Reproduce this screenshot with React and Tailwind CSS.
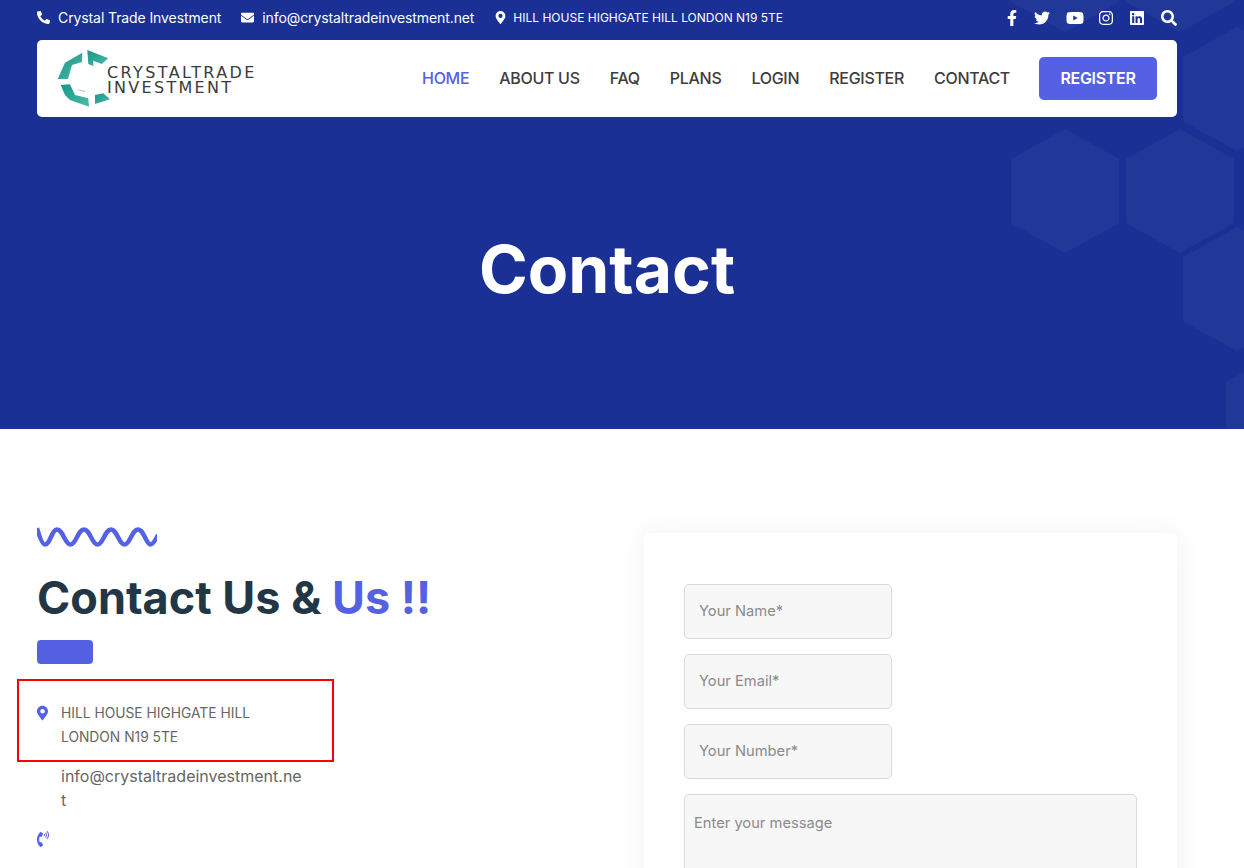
import {
  FaFacebookF,
  FaTwitter,
  FaYoutube,
  FaInstagram,
  FaLinkedin,
  FaSearch,
  FaPhoneAlt,
  FaEnvelope,
  FaMapMarkerAlt,
  FaPhoneVolume,
} from "react-icons/fa";

const navLinks = ["ABOUT US", "FAQ", "PLANS", "LOGIN", "REGISTER", "CONTACT"];
const fields = ["Your Name*", "Your Email*", "Your Number*"];

// Background hexagons of the banner, as centre x / top y
const hexagons = [
  [1065, -92],
  [1180, -92],
  [1237, 27],
  [1065, 129],
  [1180, 129],
  [1237, 227],
  [1280, 352],
];

function hexPoints(cx, top) {
  return [
    [cx, top],
    [cx + 54, top + 30],
    [cx + 54, top + 94],
    [cx, top + 124],
    [cx - 54, top + 94],
    [cx - 54, top + 30],
  ]
    .map((p) => p.join(","))
    .join(" ");
}

function Logo() {
  return (
    <div className="flex items-center">
      <svg width="50" height="58" viewBox="57 50 50 58" className="overflow-visible">
        <defs>
          <linearGradient id="teal" x1="0" y1="0" x2="1" y2="1">
            <stop offset="0" stopColor="#14988a" />
            <stop offset="1" stopColor="#4fb8a8" />
          </linearGradient>
        </defs>
        <polygon fill="url(#teal)" points="57.7,79 65,62.7 82.3,52.7 82,62 72,65 68,79" />
        <polygon fill="url(#teal)" points="87.3,50 108.3,58.3 101.7,64 93.3,60.7 93.3,66 88.3,64" />
        <polygon fill="url(#teal)" points="60.7,85 70,84.3 75,95 88.3,98.3 89,106.7 70,100 65,95" />
        <polygon fill="url(#teal)" points="95,95 103.3,93.3 110,99.3 95,104" />
        <polygon fill="#8fd0c6" points="78.3,89.3 85,91 85,92 78.3,90.3" />
      </svg>
      <div className="mt-[2px] font-['DejaVu_Sans',sans-serif] text-[16px] leading-[15px] tracking-[2.4px] text-[#3a3a3a]">
        <div>CRYSTALTRADE</div>
        <div className="tracking-[2.3px]">INVESTMENT</div>
      </div>
    </div>
  );
}

export default function App() {
  return (
    <div className="h-[868px] overflow-hidden bg-white font-['Inter',sans-serif]">
      <header className="relative flex h-[429px] flex-col overflow-hidden bg-[#1a3094]">
        <svg className="absolute inset-0 h-full w-full" aria-hidden="true">
          {hexagons.map(([cx, top]) => (
            <polygon key={`${cx}-${top}`} points={hexPoints(cx, top)} fill="#ffffff" fillOpacity="0.04" />
          ))}
        </svg>

        <div className="relative ml-[37px] flex h-[35px] w-[1140px] items-center justify-between text-white">
          <div className="flex items-center text-[14px] tracking-[-0.1px]">
            <FaPhoneAlt className="mr-2 text-[13px]" />
            <span>Crystal Trade Investment</span>
            <FaEnvelope className="ml-5 mr-2 text-[13px]" />
            <span>info@crystaltradeinvestment.net</span>
            <FaMapMarkerAlt className="ml-5 mr-[6px] text-[13px]" />
            <span className="text-[12px] tracking-normal">HILL HOUSE HIGHGATE HILL LONDON N19 5TE</span>
          </div>
          <div className="flex items-center gap-4 text-[16px]">
            <FaFacebookF />
            <FaTwitter className="ml-[-2px]" />
            <FaYoutube className="text-[18px]" />
            <FaInstagram className="ml-[-2px]" />
            <FaLinkedin className="ml-[-1px]" />
            <FaSearch />
          </div>
        </div>

        <nav className="relative ml-[37px] mt-[5px] flex h-[77px] w-[1140px] items-center rounded-[5px] bg-white pl-5 pr-5">
          <Logo />
          <div className="ml-auto flex items-center gap-[30px] text-[16px] font-medium tracking-[-0.3px] text-[#3d3d3d]">
            <a className="pb-[2px] text-[#5561e3]">HOME</a>
            {navLinks.map((link) => (
              <a key={link} className="pb-[2px]">
                {link}
              </a>
            ))}
            <button className="ml-[-1px] h-[43px] w-[118px] rounded-[5px] bg-[#5561e3] pb-[2px] text-[16px] font-semibold text-white">
              REGISTER
            </button>
          </div>
        </nav>

        <div className="relative ml-[37px] flex w-[1140px] flex-1 items-center justify-center pb-2">
          <h1 className="text-[66px] font-bold text-white">Contact</h1>
        </div>
      </header>

      <main className="relative ml-[37px] flex w-[1140px] items-start pt-[98px]">
        <section className="w-[607px]">
          <svg width="120" height="20" viewBox="0 0 120 20" fill="none" className="block">
            <path
              d="M0 1 C 2 8, 5 17.5, 8 17.5 C 13 17.5, 15 2.5, 20 2.5 C 26 2.5, 28 17.5, 33.5 17.5 C 39 17.5, 41 2.5, 47 2.5 C 53 2.5, 55 17.5, 60.5 17.5 C 66 17.5, 68 2.5, 74 2.5 C 80 2.5, 82 17.5, 87.5 17.5 C 93 17.5, 95 2.5, 101 2.5 C 107 2.5, 109 17.5, 113.5 17.5 C 116 17.5, 119 12, 121 8"
              stroke="#5561e3"
              strokeWidth="4.5"
            />
          </svg>
          <h2 className="mt-[23px] text-[45px] font-bold leading-[56px] text-[#223645]">
            Contact Us & <span className="text-[#5561e3]">Us !!</span>
          </h2>
          <div className="mt-[14px] h-6 w-14 rounded-[4px] bg-[#5561e3]" />

          <div className="relative mt-[37px] text-[16px] leading-6 text-[#666666]">
            <div className="flex">
              <FaMapMarkerAlt className="mr-[13px] mt-[4px] w-[11px] shrink-0 text-[16px] text-[#5561e3]" />
              <p className="text-[13.8px]">
                HILL HOUSE HIGHGATE HILL
                <br />
                LONDON N19 5TE
              </p>
            </div>
            <div className="mt-[15px] w-[265px] pl-[24px] break-all">info@crystaltradeinvestment.net</div>
            <FaPhoneVolume className="ml-[-2px] mt-[19px] text-[16px] text-[#5561e3]" />
            {/* annotation frame drawn over the address */}
            <div className="absolute left-[-20px] top-[-22px] h-[83px] w-[317px] border-2 border-[#ff0000]" />
          </div>
        </section>

        <section className="mt-[6px] h-[600px] w-[533px] rounded-[5px] bg-white px-10 pt-[51px] shadow-[0_0_30px_rgba(0,0,0,0.06)]">
          <form className="flex flex-col gap-[15px]">
            {fields.map((field) => (
              <input
                key={field}
                placeholder={field}
                className="h-[55px] w-[208px] rounded-[5px] border border-[#d9d9d9] bg-[#f7f7f7] px-[14px] pb-[2px] text-[14.7px] placeholder:text-[#8a8a8a]"
              />
            ))}
            <textarea
              placeholder="Enter your message"
              className="h-[200px] w-full rounded-[5px] border border-[#d9d9d9] bg-[#f7f7f7] px-[9px] py-[17px] text-[14.7px] placeholder:text-[#8a8a8a]"
            />
          </form>
        </section>
      </main>
    </div>
  );
}
